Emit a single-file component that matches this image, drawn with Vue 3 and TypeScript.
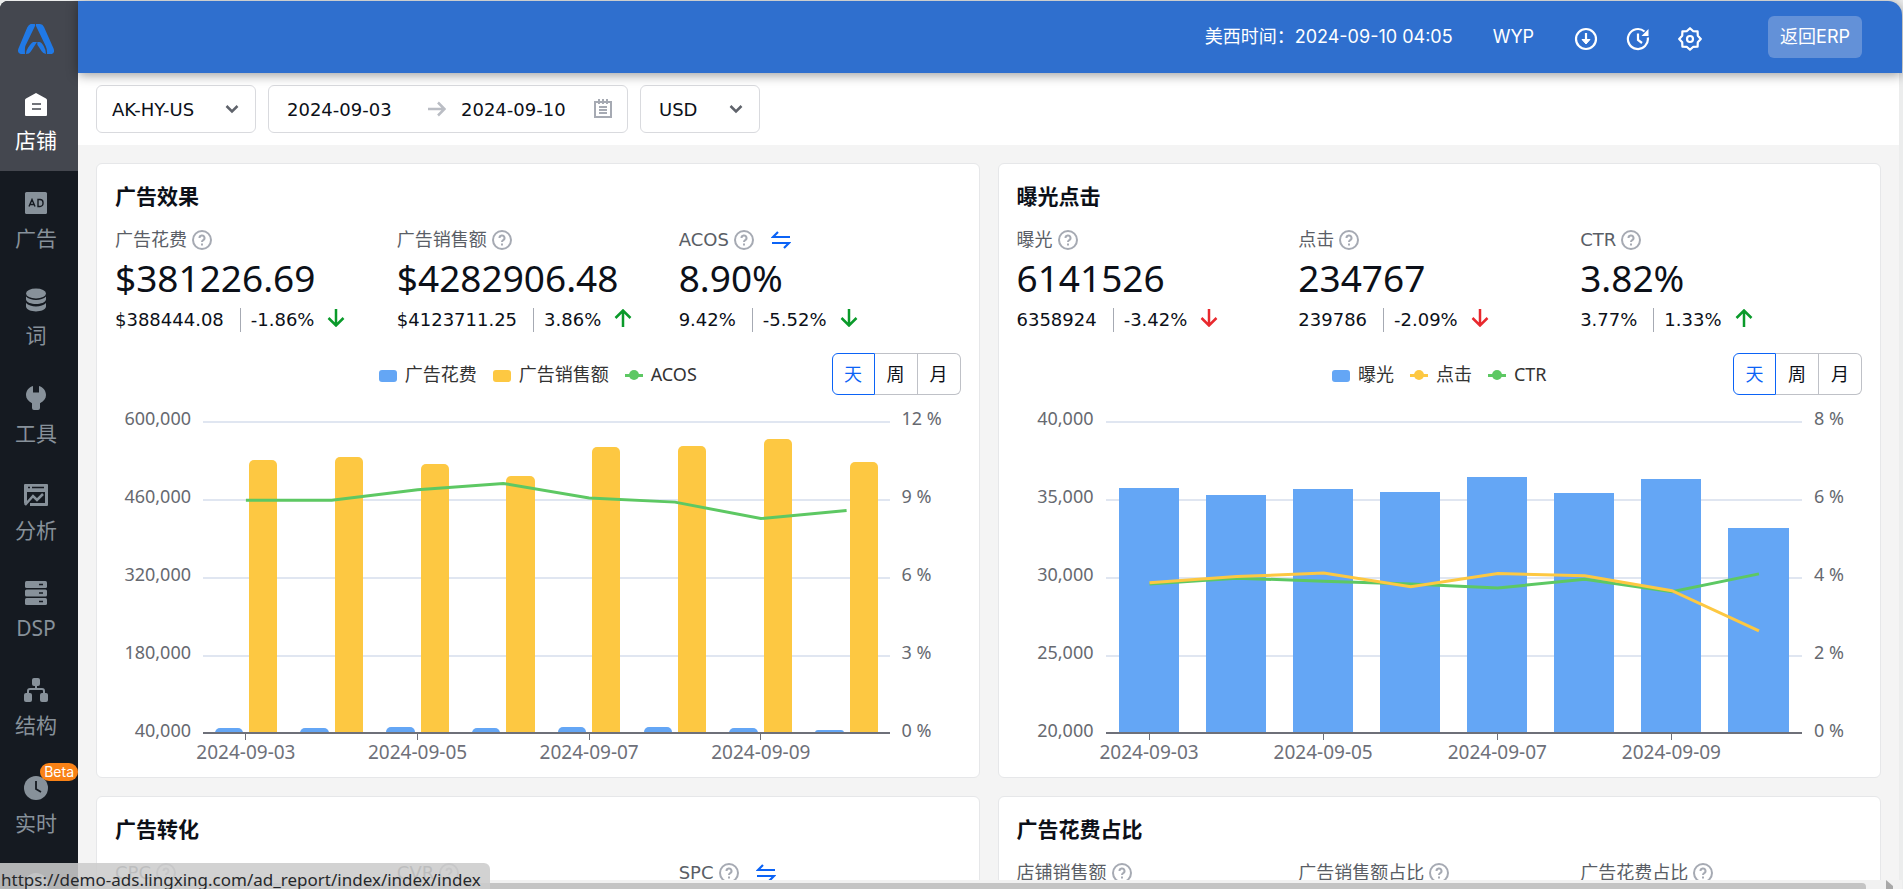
<script setup lang="ts">
import { ref } from 'vue'

interface NavItem {
  icon: string
  label: string
  active?: boolean
  badge?: string
}
interface Metric {
  label: string
  swap?: boolean
  value?: string
  previous?: string
  change?: string
  direction?: 'up' | 'down'
  tone?: 'good' | 'bad'
}
interface Series {
  name: string
  color: 'blue' | 'yellow' | 'green'
  kind: 'bar' | 'line'
  values: number[]
}
interface Chart {
  layout: 'paired' | 'single'
  left: string[]
  right: string[]
  min: number
  max: number
  percentMax: number
  series: Series[]
}
interface Panel {
  title: string
  metrics: Metric[]
  chart?: Chart
}

const nav: NavItem[] = [
  { icon: 'store', label: '店铺', active: true },
  { icon: 'ad', label: '广告' },
  { icon: 'words', label: '词' },
  { icon: 'tools', label: '工具' },
  { icon: 'analysis', label: '分析' },
  { icon: 'dsp', label: 'DSP' },
  { icon: 'structure', label: '结构' },
  { icon: 'realtime', label: '实时', badge: 'Beta' },
]

const days = [
  '2024-09-03', '2024-09-04', '2024-09-05', '2024-09-06',
  '2024-09-07', '2024-09-08', '2024-09-09', '2024-09-10',
]
const periods = ['天', '周', '月']

const panels: Panel[] = [
  {
    title: '广告效果',
    metrics: [
      { label: '广告花费', value: '$381226.69', previous: '$388444.08', change: '-1.86%', direction: 'down', tone: 'good' },
      { label: '广告销售额', value: '$4282906.48', previous: '$4123711.25', change: '3.86%', direction: 'up', tone: 'good' },
      { label: 'ACOS', swap: true, value: '8.90%', previous: '9.42%', change: '-5.52%', direction: 'down', tone: 'good' },
    ],
    chart: {
      layout: 'paired',
      left: ['600,000', '460,000', '320,000', '180,000', '40,000'],
      right: ['12 %', '9 %', '6 %', '3 %', '0 %'],
      min: 40000,
      max: 600000,
      percentMax: 12,
      series: [
        { name: '广告花费', color: 'blue', kind: 'bar', values: [48970, 49200, 50100, 49300, 51200, 50900, 48400, 46300] },
        { name: '广告销售额', color: 'yellow', kind: 'bar', values: [530900, 536300, 522800, 502200, 553300, 554600, 567700, 525900] },
        { name: 'ACOS', color: 'green', kind: 'line', values: [8.95, 8.95, 9.36, 9.6, 9.04, 8.88, 8.25, 8.56] },
      ],
    },
  },
  {
    title: '曝光点击',
    metrics: [
      { label: '曝光', value: '6141526', previous: '6358924', change: '-3.42%', direction: 'down', tone: 'bad' },
      { label: '点击', value: '234767', previous: '239786', change: '-2.09%', direction: 'down', tone: 'bad' },
      { label: 'CTR', value: '3.82%', previous: '3.77%', change: '1.33%', direction: 'up', tone: 'good' },
    ],
    chart: {
      layout: 'single',
      left: ['40,000', '35,000', '30,000', '25,000', '20,000'],
      right: ['8 %', '6 %', '4 %', '2 %', '0 %'],
      min: 20000,
      max: 40000,
      percentMax: 8,
      series: [
        { name: '曝光', color: 'blue', kind: 'bar', values: [35705, 35256, 35641, 35468, 36410, 35385, 36314, 33120] },
        { name: '点击', color: 'yellow', kind: 'line', values: [3.85, 4.01, 4.1, 3.75, 4.09, 4.03, 3.65, 2.62] },
        { name: 'CTR', color: 'green', kind: 'line', values: [3.82, 3.97, 3.89, 3.82, 3.72, 3.94, 3.62, 4.08] },
      ],
    },
  },
  {
    title: '广告转化',
    metrics: [{ label: 'CPC' }, { label: 'CVR' }, { label: 'SPC', swap: true }],
  },
  {
    title: '广告花费占比',
    metrics: [{ label: '店铺销售额' }, { label: '广告销售额占比' }, { label: '广告花费占比' }],
  },
]

const store = ref('AK-HY-US')
const startDate = ref('2024-09-03')
const endDate = ref('2024-09-10')
const currency = ref('USD')
const selected = ref<string[]>(panels.map(() => '天'))

const bars = (chart: Chart) => chart.series.filter((s) => s.kind === 'bar')
const lines = (chart: Chart) => chart.series.filter((s) => s.kind === 'line').reverse()
const barHeight = (chart: Chart, value: number) =>
  `${((value - chart.min) / (chart.max - chart.min)) * 100}%`
const points = (chart: Chart, values: number[]) =>
  values.map((v, i) => `${i * 100 + 50},${(1 - v / chart.percentMax) * 312}`).join(' ')
</script>

<template>
  <div class="app">
    <aside class="sidebar">
      <a class="logo" href="#" aria-label="首页">
        <svg width="36" height="30" viewBox="0 0 108 90">
          <path d="M38 0 H50 Q53 2 51 6 L22 66 Q20 72 21 90 H8 Q-3 88 1 74 L28 10 Q32 2 38 0Z" />
          <path d="M54 0 H66 Q74 0 78 9 L107 74 Q111 88 101 90 H87 Q88 76 83 66 L54 6Z" />
          <path d="M24 90 Q24 80 30 71 Q40 56 46 54 H57 L38 83 Q34 90 24 90Z" />
          <path d="M58 54 H64 Q70 54 77 66 Q84 78 84 90 Q76 90 71 82 L58 62Z" />
        </svg>
      </a>
      <nav class="nav">
        <a v-for="item in nav" :key="item.label" href="#" class="nav-item" :class="{ active: item.active }">
          <svg v-if="item.icon === 'store'" width="24" height="24" viewBox="0 0 24 24">
            <path fill="currentColor" d="M12 0 22 5.500Q23 6 23 7V22a1 1 0 0 1-1 1H2a1 1 0 0 1-1-1V7Q1 6 2 5.500Z" />
            <path stroke="#44474f" stroke-width="1.600" d="M8 11h9M8 16h9" />
          </svg>
          <svg v-else-if="item.icon === 'ad'" width="24" height="24" viewBox="0 0 24 24">
            <rect x="1" y="1" width="22" height="22" rx="1.500" fill="currentColor" />
            <path fill="none" stroke="#151a21" stroke-width="1.400" d="M5 15.500 8 8.500l3 7M6 13.500h4M14 8.500v7h2a3 3 0 0 0 3-3v-1a3 3 0 0 0-3-3Z" />
          </svg>
          <svg v-else-if="item.icon === 'words'" width="24" height="24" viewBox="0 0 24 24">
            <ellipse cx="12" cy="5.500" rx="10" ry="5" fill="currentColor" />
            <path fill="currentColor" d="M2 8.500c4 4.500 16 4.500 20 0v3c-1 6-19 6-20 0ZM2 15c4 4.500 16 4.500 20 0v3.500c-1 6.500-19 6.500-20 0Z" />
          </svg>
          <svg v-else-if="item.icon === 'tools'" width="24" height="24" viewBox="0 0 24 24">
            <path fill="currentColor" d="M9 0v6.500h6V0c4 1.200 7 4.800 7 9 0 3.600-2 6-6 8.200V22q0 2-2 2h-4q-2 0-2-2v-4.800C4 15 2 12.600 2 9c0-4.200 3-7.800 7-9Z" />
          </svg>
          <svg v-else-if="item.icon === 'analysis'" width="24" height="24" viewBox="0 0 24 24">
            <path fill="currentColor" d="M1 1h22a1 1 0 0 1 1 1v20a1 1 0 0 1-1 1H6v-3h15V9H3v10L0 21V2a1 1 0 0 1 1-1Z" />
            <path stroke="#151a21" stroke-width="1.500" d="M4 4.500h2M8 4.500h12" />
            <path fill="none" stroke="currentColor" stroke-width="2.500" d="m1 22 8-9 4 4 6-6" />
          </svg>
          <svg v-else-if="item.icon === 'dsp'" width="24" height="24" viewBox="0 0 24 24">
            <g fill="currentColor">
              <rect x="1" y="0" width="22" height="7" rx="1.500" />
              <rect x="1" y="8.500" width="22" height="7" rx="1.500" />
              <rect x="1" y="17" width="22" height="7" rx="1.500" />
            </g>
            <path stroke="#151a21" stroke-width="1.500" d="M15 3.500h4M15 12h4M15 20.500h4" />
          </svg>
          <svg v-else-if="item.icon === 'structure'" width="24" height="24" viewBox="0 0 24 24">
            <g fill="currentColor">
              <rect x="8" y="0" width="8" height="8" rx="2" />
              <rect x="0" y="15" width="8" height="9" rx="2" />
              <rect x="16" y="15" width="8" height="9" rx="2" />
            </g>
            <path fill="none" stroke="currentColor" stroke-width="2" d="M12 7v4M4 17v-4q0-2 2-2h12q2 0 2 2v4" />
          </svg>
          <svg v-else width="24" height="24" viewBox="0 0 24 24">
            <circle cx="12" cy="12" r="12" fill="currentColor" />
            <path fill="none" stroke="#151a21" stroke-width="1.800" d="M12 5v8l5 3" />
          </svg>
          <span class="nav-label">{{ item.label }}</span>
          <span v-if="item.badge" class="badge">{{ item.badge }}</span>
        </a>
      </nav>
      <a href="#" class="nav-item" aria-label="设置">
        <svg width="24" height="24" viewBox="0 0 24 24"><circle cx="12" cy="12" r="12" fill="currentColor" /></svg>
      </a>
    </aside>

    <div class="body">
      <header class="topbar">
        <span class="clock">美西时间：2024-09-10 04:05</span>
        <button class="user" type="button">WYP</button>
        <div class="tools">
          <button type="button" aria-label="下载">
            <svg width="24" height="24" viewBox="0 0 24 24" fill="none" stroke="#fff" stroke-width="2.200">
              <circle cx="12" cy="12" r="10" />
              <path d="M12 6v9" />
              <path fill="#fff" stroke-width="1" d="M8 12.500h8l-4 4.500Z" />
            </svg>
          </button>
          <button type="button" aria-label="刷新">
            <svg width="24" height="24" viewBox="0 0 24 24" fill="none" stroke="#fff" stroke-width="2.200">
              <path d="M21.800 10.500A10 10 0 1 1 18.500 4.500M12 6.500V13l4 3" />
              <path fill="#fff" stroke="none" d="M22.500 2v7h-7Z" />
            </svg>
          </button>
          <button type="button" aria-label="设置">
            <svg width="24" height="24" viewBox="0 0 24 24" fill="none" stroke="#fff" stroke-width="2.200" stroke-linejoin="round">
              <path d="M12 1.200 15.300 4.200 19.600 4.400 19.800 8.700 22.800 12 19.800 15.300 19.600 19.600 15.300 19.800 12 22.800 8.700 19.800 4.400 19.600 4.200 15.300 1.200 12 4.200 8.700 4.400 4.400 8.700 4.200Z" />
              <circle cx="12" cy="12" r="3" />
            </svg>
          </button>
        </div>
        <button class="back" type="button">返回ERP</button>
      </header>

      <form class="filters" @submit.prevent>
        <label class="field store">
          <select v-model="store" aria-label="店铺"><option>AK-HY-US</option></select>
          <svg width="14" height="10" viewBox="0 0 14 10"><path d="m1.500 2 5.500 5.500L12.500 2" /></svg>
        </label>
        <div class="field range">
          <input v-model="startDate" type="text" aria-label="开始日期" />
          <svg class="to" width="18" height="16" viewBox="0 0 18 16"><path d="M0 8h16M10 1.500 16.500 8 10 14.500" /></svg>
          <input v-model="endDate" type="text" aria-label="结束日期" />
          <svg class="calendar" width="20" height="20" viewBox="0 0 20 20">
            <path d="M2 3h16v15H2ZM6 8h8M6 11h8M6 14h8" />
            <path d="M6 0v5M10 0v5M14 0v5" />
          </svg>
        </div>
        <label class="field currency">
          <select v-model="currency" aria-label="币种"><option>USD</option></select>
          <svg width="14" height="10" viewBox="0 0 14 10"><path d="m1.500 2 5.500 5.500L12.500 2" /></svg>
        </label>
      </form>

      <main class="content">
        <section v-for="(panel, index) in panels" :key="panel.title" class="card">
          <h2>{{ panel.title }}</h2>
          <div class="metrics">
            <div v-for="m in panel.metrics" :key="m.label" class="metric">
              <div class="metric-label">
                <span>{{ m.label }}</span>
                <svg class="help" width="20" height="20" viewBox="0 0 20 20">
                  <circle cx="10" cy="10" r="9" />
                  <path d="M7.500 8a2.500 2.500 0 1 1 3.700 2.200Q10 10.900 10 12" />
                  <path d="M10 13.500v2" />
                </svg>
                <svg v-if="m.swap" class="swap" width="20" height="18" viewBox="0 0 20 18">
                  <path d="M19 6H2l5-5M1 12h17l-5 5" />
                </svg>
              </div>
              <template v-if="m.value">
                <div class="value">{{ m.value }}</div>
                <div class="compare">
                  <span class="previous">{{ m.previous }}</span>
                  <span class="change">{{ m.change }}</span>
                  <svg :class="['trend', m.direction, m.tone]" width="18" height="18" viewBox="0 0 18 18">
                    <path d="M9 0v16M1.500 9 9 16.500 16.500 9" />
                  </svg>
                </div>
              </template>
            </div>
          </div>

          <template v-if="panel.chart">
            <div class="chart-head">
              <div class="legend">
                <span v-for="s in panel.chart.series" :key="s.name" class="legend-item">
                  <i :class="['mark', s.kind, s.color]"></i>{{ s.name }}
                </span>
              </div>
              <div class="toggle" role="group" aria-label="周期">
                <button
                  v-for="p in periods"
                  :key="p"
                  type="button"
                  :class="{ on: selected[index] === p }"
                  @click="selected[index] = p"
                >{{ p }}</button>
              </div>
            </div>

            <div :class="['chart', panel.chart.layout]">
              <div class="axis left"><span v-for="t in panel.chart.left" :key="t">{{ t }}</span></div>
              <div class="plot">
                <div class="canvas">
                  <div v-for="(d, i) in days" :key="d" class="band">
                    <div
                      v-for="s in bars(panel.chart)"
                      :key="s.name"
                      :class="['column', s.color]"
                      :style="{ height: barHeight(panel.chart, s.values[i]) }"
                    ></div>
                  </div>
                  <svg class="lines" viewBox="0 0 800 312" preserveAspectRatio="none">
                    <polyline
                      v-for="s in lines(panel.chart)"
                      :key="s.name"
                      :class="s.color"
                      :points="points(panel.chart, s.values)"
                    />
                  </svg>
                </div>
                <div class="dates">
                  <div v-for="(d, i) in days" :key="d" class="date">
                    <template v-if="i % 2 === 0"><i></i><span>{{ d }}</span></template>
                  </div>
                </div>
              </div>
              <div class="axis right"><span v-for="t in panel.chart.right" :key="t">{{ t }}</span></div>
            </div>
          </template>
        </section>
      </main>

      <div class="scroll">
        <div class="thumb"></div>
        <svg width="8" height="9" viewBox="0 0 8 9"><path fill="#a8a8a8" d="M0 0 7 6v3H0Z" /></svg>
      </div>
    </div>

    <div class="status">https://demo-ads.lingxing.com/ad_report/index/index/index</div>
  </div>
</template>

<style>
html,
body {
  margin: 0;
  background: #f0f1f2;
}
</style>

<style scoped>
.app {
  --ui: "DejaVu Sans", "Noto Sans CJK SC", sans-serif;
  --text: "Noto Sans", "Noto Sans CJK SC", sans-serif;
  position: relative;
  display: flex;
  box-sizing: border-box;
  height: 100vh;
  padding: 1px 1px 0 0;
  overflow: hidden;
  background: #eceded;
  color: #0c1018;
  font: 18px/24px var(--ui);
}
.app *,
.app *::before,
.app *::after {
  box-sizing: border-box;
}
button,
input,
select {
  margin: 0;
  padding: 0;
  border: 0;
  background: none;
  color: inherit;
  font: inherit;
}
a {
  color: inherit;
  text-decoration: none;
}
svg {
  flex: none;
}

/* Sidebar */
.sidebar {
  flex: none;
  width: 78px;
  overflow: hidden;
  border-top-left-radius: 8px;
  background: #151a21;
  color: #87919a;
}
.logo {
  display: flex;
  justify-content: center;
  height: 72px;
  padding-top: 23px;
  background: #44474f;
}
.logo path {
  fill: #2079e6;
}
.logo svg {
  margin-right: 6px;
}
.nav {
  display: grid;
  grid-template-rows: repeat(8, 1fr);
  height: 780px;
}
.nav-item {
  position: relative;
  display: flex;
  flex-direction: column;
  align-items: center;
  gap: 7px;
  padding: 20px 6px 0 0;
  font: 21px/32px var(--text);
}
.nav-item.active {
  background: #44474f;
  color: #fff;
}
.nav-label {
  white-space: nowrap;
}
.badge {
  position: absolute;
  top: 7px;
  right: 0;
  height: 18px;
  padding: 0 4px;
  border-radius: 9px;
  background: #f98216;
  color: #fff;
  font: 14px/17px Inter, sans-serif;
}

/* Top bar */
.body {
  flex: 1;
  min-width: 0;
  display: flex;
  flex-direction: column;
}
.topbar {
  position: relative;
  z-index: 2;
  flex: none;
  display: flex;
  align-items: center;
  justify-content: flex-end;
  height: 72px;
  padding-right: 40px;
  border-top-right-radius: 14px;
  background: #2f6fce;
  box-shadow: 0 2px 12px rgba(0, 0, 0, 0.4);
  color: #fff;
  font: 18px/24px Inter, "Noto Sans CJK SC", sans-serif;
}
.user {
  margin-left: 40px;
}
.tools {
  display: flex;
  gap: 28px;
  margin: 4px 0 0 40px;
}
.tools button {
  width: 24px;
  height: 24px;
}
.tools svg {
  display: block;
}
.back {
  height: 42px;
  margin-left: 66px;
  padding: 0 12px;
  border-radius: 6px;
  background: #6391d8;
}

/* Filters */
.filters {
  flex: none;
  display: flex;
  gap: 12px;
  height: 72px;
  margin-right: 3px;
  padding: 12px 18px;
  background: #fff;
}
.field {
  display: flex;
  align-items: center;
  height: 48px;
  border: 1px solid #d9dade;
  border-radius: 6px;
}
.field select {
  flex: 1;
  min-width: 0;
  height: 100%;
  padding-top: 2px;
  appearance: none;
  outline: 0;
}
.field path {
  fill: none;
  stroke: #5f636b;
  stroke-width: 2.5;
}
.store {
  width: 160px;
  padding: 0 16px 0 15px;
}
.currency {
  width: 120px;
  padding: 0 16px 0 18px;
}
.range {
  width: 360px;
  padding: 0 14px 0 18px;
}
.range input {
  width: 112px;
  padding-top: 2px;
  outline: 0;
}
.range .to {
  margin: 0 15px 0 29px;
}
.range .to path {
  stroke: #babdc4;
  stroke-width: 2.5;
}
.range .calendar {
  margin-left: auto;
}
.range .calendar path {
  stroke: #a6aab3;
  stroke-width: 2;
}

/* Cards */
.content {
  flex: 1;
  min-height: 0;
  display: grid;
  grid-template-columns: repeat(2, minmax(0, 1fr));
  grid-auto-rows: max-content;
  gap: 18px;
  margin-right: 3px;
  padding: 18px 18px 0;
  overflow: hidden;
  background: #f4f4f4;
}
.card {
  padding: 16px 18px 13px;
  border: 1px solid #e6e7e9;
  border-radius: 6px;
  background: #fff;
}
h2 {
  margin: 0 0 16px;
  font: bold 21px/32px var(--text);
}
.metrics {
  display: grid;
  grid-template-columns: repeat(3, minmax(0, 1fr));
}
.metric-label {
  display: flex;
  align-items: center;
  height: 24px;
  color: #5a5e66;
}
.help {
  margin-left: 5px;
}
.help * {
  fill: none;
  stroke: #a6aab3;
  stroke-width: 2;
}
.swap {
  margin-left: 17px;
}
.swap path {
  fill: none;
  stroke: #0b63f6;
  stroke-width: 2.2;
}
.value {
  margin: 2px 0 6px;
  font: 37px/48px var(--text);
}
.compare {
  display: flex;
  align-items: center;
  height: 24px;
}
.change {
  margin-left: 16px;
  padding-left: 10px;
  border-left: 1px solid #a6aab3;
}
.trend {
  margin: 0 0 4px 13px;
}
.trend.up {
  transform: rotate(180deg);
}
.trend path {
  fill: none;
  stroke-width: 2.5;
}
.trend.good path {
  stroke: #0a9a2a;
}
.trend.bad path {
  stroke: #e8292e;
}

/* Charts */
.chart-head {
  display: grid;
  grid-template-columns: 1fr auto 1fr;
  align-items: center;
  margin: 21px 0 26px;
}
.legend {
  grid-column: 2;
  display: flex;
  gap: 16px;
  color: #333;
  font: 18px/24px var(--text);
  white-space: nowrap;
}
.legend-item {
  display: flex;
  align-items: center;
  gap: 8px;
}
.mark {
  position: relative;
  flex: none;
  width: 18px;
  height: 12px;
  border-radius: 3px;
  margin-top: 3px;
}
.blue {
  background: #64a6f5;
  stroke: #64a6f5;
}
.yellow {
  background: #fdc842;
  stroke: #fdc842;
}
.green {
  background: #5dc863;
  stroke: #5dc863;
}
.mark.line {
  height: 3px;
  border-radius: 0;
}
.mark.line::after {
  content: "";
  position: absolute;
  top: -4px;
  left: 4px;
  width: 10px;
  height: 10px;
  border-radius: 50%;
  background: inherit;
}
.toggle {
  grid-column: 3;
  justify-self: end;
  display: flex;
  height: 42px;
  font-family: var(--text);
}
.toggle button {
  width: 43px;
  border: 1px solid #bfc1c7;
  border-left-width: 0;
}
.toggle button.on {
  border: 1px solid #0b63f6;
  color: #0b63f6;
}
.toggle button:first-child {
  border-left-width: 1px;
  border-radius: 6px 0 0 6px;
}
.toggle button:last-child {
  border-radius: 0 6px 6px 0;
}
.chart {
  display: grid;
  grid-template-columns: 88px minmax(0, 1fr) 71px;
}
.chart.single {
  grid-template-columns: 89px minmax(0, 1fr) 60px;
}
.axis {
  display: flex;
  flex-direction: column;
  justify-content: space-between;
  height: 336px;
  margin-top: -15px;
  color: #666970;
  font: 18px/24px var(--text);
}
.axis.left {
  padding-right: 12px;
  text-align: right;
}
.axis.right {
  padding-left: 12px;
}
.canvas {
  position: relative;
  display: flex;
  height: 312px;
  background: repeating-linear-gradient(#e0e6f1 0 2px, transparent 2px 78px);
}
.canvas::after {
  content: "";
  position: absolute;
  right: 0;
  bottom: -1px;
  left: 0;
  height: 2px;
  background: #6e7079;
}
.band {
  flex: 1;
  display: flex;
  align-items: flex-end;
  justify-content: center;
  gap: 6px;
}
.column {
  width: 33%;
  border-radius: 5px 5px 0 0;
}
.single .column {
  width: 69%;
  border-radius: 0;
}
.lines {
  position: absolute;
  inset: 0;
  width: 100%;
  height: 100%;
}
.lines polyline {
  fill: none;
  stroke-width: 3;
  vector-effect: non-scaling-stroke;
}
.dates {
  display: flex;
  color: #6e7079;
  font: 19px/24px var(--text);
}
.date {
  flex: 1;
  min-width: 0;
  display: flex;
  flex-direction: column;
  align-items: center;
  white-space: nowrap;
}
.date i {
  width: 1px;
  height: 7px;
  background: #6e7079;
}

/* Bottom edge */
.scroll {
  flex: none;
  display: flex;
  align-items: flex-end;
  gap: 20px;
  height: 9px;
  padding-right: 8px;
  background: #f1f1f1;
}
.thumb {
  flex: 1;
  height: 6px;
  border-radius: 0 4px 0 0;
  background: #c4c4c4;
}
.status {
  position: absolute;
  bottom: 0;
  left: 0;
  z-index: 5;
  height: 26px;
  padding: 4px 9px 0 1px;
  overflow: hidden;
  border-top-right-radius: 6px;
  background: rgba(203, 203, 203, 0.87);
  color: #26282b;
  font: 17px/26px var(--text);
}
</style>
